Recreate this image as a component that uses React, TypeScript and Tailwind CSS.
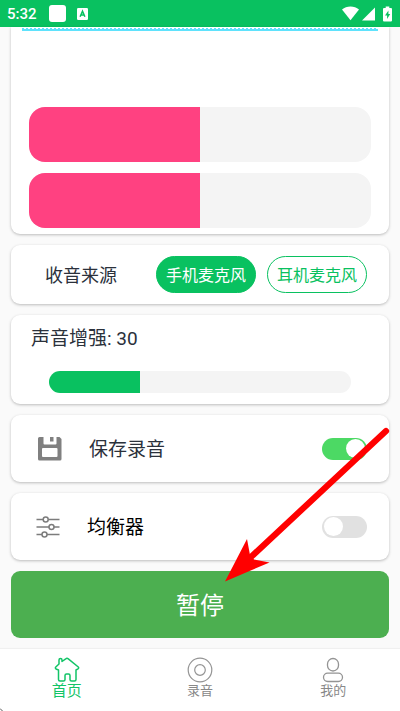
import { useState } from "react";
import type { ReactNode } from "react";

function StatusBar() {
  return (
    <header className="flex h-[27px] shrink-0 items-center bg-[#09c160] pr-2 pl-[7px] text-white">
      <span className="text-[15px] leading-6 font-medium">5:32</span>
      <span className="ml-3 size-[17px] rounded-[3px] bg-white" />
      <svg className="ml-[11px] h-3 w-[11px]" viewBox="0 0 11 12" aria-hidden="true">
        <rect width="11" height="12" rx="1.2" fill="#fff" />
        <path d="M3.1 8.8 5.5 3.2 7.9 8.8M4 7h3" fill="none" stroke="#09c160" strokeWidth="1.5" />
      </svg>
      <div className="ml-auto flex items-center">
        <svg className="h-[15px] w-[17px]" viewBox="0 0 17 15" aria-hidden="true">
          <path d="M0 3.600C2.300 1.700 5.300.6 8.500.6s6.200 1.100 8.500 3L8.500 14.200z" fill="#fff" />
        </svg>
        <svg className="ml-[3px] h-[14px] w-[13px]" viewBox="0 0 13 14" aria-hidden="true">
          <path d="M13 0.600V13.500H0z" fill="#fff" />
        </svg>
        <svg className="ml-2 h-4 w-[9px]" viewBox="0 0 9 16" aria-hidden="true">
          <path d="M2.700 .5h3.600v1.500H8a1 1 0 0 1 1 1V14.500a1 1 0 0 1-1 1H1a1 1 0 0 1-1-1V3a1 1 0 0 1 1-1h1.700z" fill="#fff" />
          <path d="M5.400 4.500 2 9.400h2.100v3.600L7.200 8H5.400z" fill="#09c160" />
        </svg>
      </div>
    </header>
  );
}

function Card({ className, children }: { className: string; children: ReactNode }) {
  return (
    <section className={`rounded-[9px] bg-white shadow-[0_1px_3px_rgba(0,0,0,0.25)] ${className}`}>
      {children}
    </section>
  );
}

function Meter({ label, value }: { label: string; value: number }) {
  return (
    <div
      role="meter"
      aria-label={label}
      aria-valuenow={value}
      aria-valuemin={0}
      aria-valuemax={100}
      className="h-[55px] overflow-hidden rounded-2xl bg-[#f4f4f4]"
    >
      <div className="h-full bg-[#ff4181]" style={{ width: `${value}%` }} />
    </div>
  );
}

function Toggle({ id, initial }: { id: string; initial: boolean }) {
  const [on, setOn] = useState(initial);
  return (
    <input
      id={id}
      type="checkbox"
      role="switch"
      checked={on}
      onChange={(e) => setOn(e.target.checked)}
      className="ml-auto flex h-[22px] w-[45px] appearance-none items-center rounded-full bg-[#e1e1e1] px-0.5 before:size-[19px] before:rounded-full before:bg-white checked:justify-end checked:bg-[#4cd964]"
    />
  );
}

function SaveIcon() {
  return (
    <svg className="size-6" viewBox="0 0 24 24" aria-hidden="true">
      <path
        d="M1.500 0H5.500v6.500a1 1 0 0 0 1 1h11a1 1 0 0 0 1-1V0h3L23.500 2V22a1.500 1.500 0 0 1-1.500 1.500h-20.500A1.500 1.500 0 0 1 0 22V1.500A1.500 1.500 0 0 1 1.500 0z M5 11a1 1 0 0 0-1 1V19a1 1 0 0 0 1 1h13.500a1 1 0 0 0 1-1v-7a1 1 0 0 0-1-1z"
        fill="#808080"
        fillRule="evenodd"
      />
      <rect x="12" y="0" width="3.500" height="4.500" fill="#808080" />
    </svg>
  );
}

function EqualizerIcon() {
  return (
    <svg className="h-[22px] w-6" viewBox="0 0 24 22" fill="none" stroke="#7c7c7c" strokeWidth="1.500" aria-hidden="true">
      <path d="M0.500 3.500H7M12.500 3.500h11M0.500 11h12.500M18 11h5.500M0.500 18.500H6M11 18.500h12.500" />
      <circle cx="9.700" cy="3.500" r="2.500" />
      <circle cx="15.500" cy="11" r="2.500" />
      <circle cx="8.500" cy="18.500" r="2.500" />
    </svg>
  );
}

function HomeIcon() {
  return (
    <svg className="h-[26px] w-[26px]" viewBox="0 0 26 26" fill="none" stroke="#12c467" strokeWidth="1.500" strokeLinejoin="round" strokeLinecap="round" aria-hidden="true">
      <path d="M5 7V3q0-1.500 1.500-1.500T8 3v1.500L11.700 1.800q1.300-1 2.600 0L24.300 10q.9 1-.3 1.900L22 13v9.500q0 1.500-1.500 1.500h-3q-1.500 0-1.500-1.500v-4q0-1.500-1.500-1.500h-2q-1.500 0-1.500 1.500v4q0 1.500-1.500 1.500h-3.500q-1.500 0-1.500-1.500V13L2 12q-1.200-1-.2-2z" />
    </svg>
  );
}

function RecordIcon() {
  return (
    <svg className="h-[26px] w-[26px]" viewBox="0 0 26 26" fill="none" stroke="#949494" strokeWidth="1.200" aria-hidden="true">
      <circle cx="13" cy="13" r="11.800" />
      <circle cx="13" cy="13" r="5.300" />
    </svg>
  );
}

function UserIcon() {
  return (
    <svg className="h-[26px] w-[26px]" viewBox="0 0 26 26" fill="none" stroke="#949494" strokeWidth="1.300" aria-hidden="true">
      <rect x="7.500" y="1.500" width="11" height="12.500" rx="5.500" />
      <rect x="3.500" y="16.200" width="19" height="8.300" rx="4.150" />
    </svg>
  );
}

function Tab({ icon, label, active = false }: { icon: ReactNode; label: string; active?: boolean }) {
  return (
    <button
      type="button"
      aria-current={active ? "page" : undefined}
      className={`flex flex-1 flex-col items-center pt-2 ${active ? "text-[15px] text-[#12c467]" : "text-[13px] text-[#888888]"}`}
    >
      {icon}
      <span className="leading-4">{label}</span>
    </button>
  );
}

export default function App() {
  const [gain, setGain] = useState(30);
  const [source, setSource] = useState("phone");
  const sources = [
    { id: "phone", name: "手机麦克风" },
    { id: "headset", name: "耳机麦克风" },
  ];

  return (
    <div className="relative flex min-h-screen flex-col overflow-hidden bg-[#fafafa] font-[Roboto,'Noto_Sans_CJK_SC',sans-serif] text-[#2b313b]">
      <StatusBar />
      <main className="flex flex-1 flex-col gap-[11px] px-[11px] pb-[11px]">
        <section className="rounded-b-[9px] bg-white pb-1.5 shadow-[0_1px_3px_rgba(0,0,0,0.25)]">
          <svg className="mx-[11px] h-20 w-[calc(100%-22px)]" aria-hidden="true">
            <line x1="0" y1="3" x2="100%" y2="3" stroke="#5fe2fc" strokeWidth="2" />
            <line x1="0" y1="1.500" x2="100%" y2="1.500" stroke="#5fe2fc" strokeWidth="1" strokeDasharray="2 2" />
          </svg>
          <div className="flex flex-col gap-[11px] px-[18px]">
            <Meter label="左声道" value={50} />
            <Meter label="右声道" value={50} />
          </div>
        </section>

        <Card className="flex h-[59px] items-center pr-[22px] pl-[34px]">
          <h2 className="pt-0.5 text-lg">收音来源</h2>
          <div className="ml-auto flex gap-[11px]">
            {sources.map((s) => (
              <button
                key={s.id}
                type="button"
                aria-pressed={source === s.id}
                onClick={() => setSource(s.id)}
                className={`h-[37px] rounded-full border border-[#09c160] px-[9px] pt-0.5 text-base whitespace-nowrap ${source === s.id ? "bg-[#09c160] text-white" : "bg-white text-[#09c160]"}`}
              >
                {s.name}
              </button>
            ))}
          </div>
        </Card>

        <Card className="flex h-[89px] flex-col px-5 pt-[11px]">
          <label htmlFor="gain" className="text-[19px] leading-[26px]">
            声音增强: {gain}
          </label>
          <input
            id="gain"
            type="range"
            min={0}
            max={100}
            value={gain}
            onChange={(e) => setGain(Number(e.target.value))}
            className="mx-[18px] mt-[19px] h-[22px] appearance-none overflow-hidden rounded-full [&::-webkit-slider-thumb]:size-0 [&::-webkit-slider-thumb]:appearance-none"
            style={{ background: `linear-gradient(to right, #09c160 ${gain}%, #f4f4f4 ${gain}%)` }}
          />
        </Card>

        <Card className="flex h-[67px] items-center pr-[22px] pl-[27px]">
          <SaveIcon />
          <label htmlFor="save" className="ml-[27px] pt-1 text-[19px]">保存录音</label>
          <Toggle id="save" initial={true} />
        </Card>

        <Card className="flex h-[67px] items-center pr-[22px] pl-[25px]">
          <EqualizerIcon />
          <label htmlFor="equalizer" className="ml-[27px] pt-1 text-[19px] text-black">均衡器</label>
          <Toggle id="equalizer" initial={false} />
        </Card>

        <button type="button" className="h-[67px] rounded-[9px] bg-[#4caf50] pt-0.5 text-2xl text-white">
          暂停
        </button>
      </main>

      <nav className="flex h-[62px] shrink-0 bg-white shadow-[0_-1px_1px_rgba(0,0,0,0.04)]">
        <Tab icon={<HomeIcon />} label="首页" active />
        <Tab icon={<RecordIcon />} label="录音" />
        <Tab icon={<UserIcon />} label="我的" />
      </nav>

      <svg className="pointer-events-none absolute top-[424px] right-[8px] h-[160px] w-[170px]" viewBox="0 0 170 160" aria-hidden="true">
        <path d="M164 7 29 133" stroke="#ff0000" strokeWidth="6.200" strokeLinecap="round" />
        <path d="M3 157.500 25 115 28 131 32 135.500 47.500 138.500z" fill="#ff0000" />
      </svg>
      <svg className="pointer-events-none absolute bottom-0 left-0 size-[3px]" viewBox="0 0 3 3" aria-hidden="true">
        <path d="M0 0.500 2.500 3" stroke="#555" strokeWidth="1" />
      </svg>
    </div>
  );
}
